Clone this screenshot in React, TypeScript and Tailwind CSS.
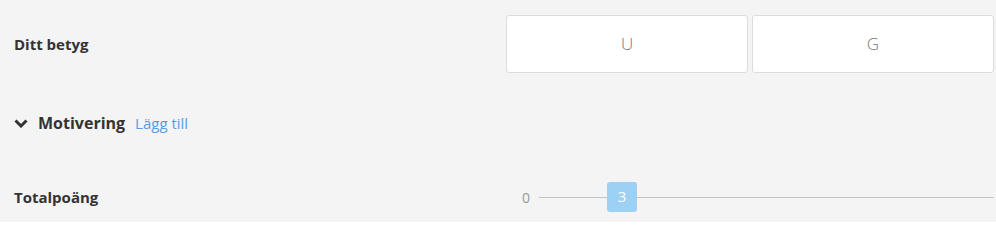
export default function App() {
  return (
    <main
      className="h-[222px] w-full overflow-hidden bg-[#f4f4f4] text-[#333] pl-[14px] pr-[2px] pt-[15px]"
      style={{ fontFamily: '"Open Sans", "Liberation Sans", sans-serif' }}
    >
      {/* Grade row */}
      <div className="flex items-center">
        <p className="flex-1 text-[15px] font-bold">Ditt betyg</p>
        <div className="grid w-[488px] grid-cols-2 gap-1">
          {["U", "G"].map((g) => (
            <button
              key={g}
              className="flex h-[58px] items-center justify-center rounded-[3px] border border-[#dcdcdc] bg-white text-[17px] font-light text-[#777]"
            >
              {g}
            </button>
          ))}
        </div>
      </div>

      {/* Motivation */}
      <div className="mt-[38px] flex h-6 items-center">
        <svg width="14" height="9" viewBox="0 0 14 9" className="mr-[10px]">
          <polyline
            points="1.5,1.5 7,7 12.5,1.5"
            fill="none"
            stroke="#333"
            strokeWidth="3"
          />
        </svg>
        <span className="text-[16px] font-bold">Motivering</span>
        <a className="ml-[10px] text-[15px] text-[#5b9be0]">Lägg till</a>
      </div>

      {/* Total score */}
      <div className="mt-[47px] flex h-[30px] items-center">
        <p className="flex-1 text-[15px] font-bold">Totalpoäng</p>
        <div className="flex w-[488px] items-center">
          <span className="ml-[16px] text-[14px] text-[#999]">0</span>
          <div className="relative ml-[9px] h-px flex-1 bg-[#c4c4c4]">
            <div className="absolute left-[68px] top-[-15px] flex h-[30px] w-[30px] items-center justify-center rounded-[3px] bg-[#9dd0f5] text-[15px] text-white">
              3
            </div>
          </div>
        </div>
      </div>
    </main>
  );
}
